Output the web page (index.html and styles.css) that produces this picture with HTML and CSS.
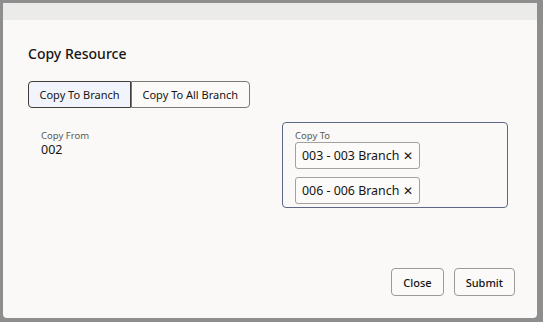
FILE: index.html
```html
<!DOCTYPE html>
<html lang="en">
<head>
  <meta charset="UTF-8" />
  <meta name="viewport" content="width=device-width, initial-scale=1.0" />
  <title>Copy Resource</title>
  <link rel="stylesheet" href="styles.css">
</head>
<body>
  <div class="dialog">
    <div class="strip"></div>
    <div class="content">
      <h1 class="title">Copy Resource</h1>

      <div class="segments">
        <button class="seg selected">Copy To Branch</button>
        <button class="seg">Copy To All Branch</button>
      </div>

      <div class="fields">
        <div class="from">
          <div class="label">Copy From</div>
          <div class="value">002</div>
        </div>
        <div class="to">
          <div class="label">Copy To</div>
          <div class="chips">
            <span class="chip">003 - 003 Branch <span class="x">&#x2715;</span></span>
            <span class="chip">006 - 006 Branch <span class="x">&#x2715;</span></span>
          </div>
        </div>
      </div>

      <div class="footer">
        <button class="btn">Close</button>
        <button class="btn">Submit</button>
      </div>
    </div>
  </div>
</body>
</html>
```

FILE: styles.css
```css
* { box-sizing: border-box; }
body {
  margin: 0;
  background: #8e8e8e;
  font-family: "Noto Sans", "Open Sans", sans-serif;
  color: #161513;
  height: 322px;
  padding: 3px 6px 4px 3px;
}
.dialog {
  height: 100%;
  background: #faf9f8;
  border-radius: 0 0 4px 4px;
  display: flex;
  flex-direction: column;
}
.strip {
  height: 17px;
  background: #ebebea;
}
.content {
  flex: 1;
  padding: 24px 22px 22px 25px;
  display: flex;
  flex-direction: column;
}
.title {
  margin: 0;
  font-size: 14px;
  font-weight: 500;
  line-height: 20px;
}
.segments {
  display: flex;
  margin-top: 17px;
}
.seg {
  font-family: inherit;
  font-size: 11px;
  color: #161513;
  height: 27px;
  padding: 0 10.5px;
  background: #fbfaf9;
  border: 1px solid #7a7875;
  cursor: pointer;
}
.seg:first-child {
  border-radius: 4px 0 0 4px;
  border-right: none;
}
.seg:last-child {
  border-radius: 0 4px 4px 0;
}
.seg.selected {
  background: #f1f4fb;
  border-color: #3f3d3a;
  border-right: 1px solid #3f3d3a;
}
.fields {
  display: flex;
  margin-top: 14px;
}
.from {
  width: 254px;
  padding: 8px 0 0 13px;
}
.label {
  font-size: 9.5px;
  color: #5b5954;
  line-height: 12px;
}
.value {
  font-size: 12.5px;
  line-height: 15px;
}
.to {
  width: 226px;
  height: 86px;
  border: 1px solid #5d6886;
  border-radius: 4px;
  padding: 7px 12px 0 12px;
}
.chips {
  display: flex;
  flex-direction: column;
  align-items: flex-start;
  gap: 8px;
}
.chip {
  font-size: 12.4px;
  height: 27px;
  line-height: 25px;
  padding: 0 6px;
  border: 1px solid #a3a19e;
  border-radius: 3px;
  background: #fcfbfa;
}
.x {
  font-size: 12px;
  font-weight: 300;
}
.footer {
  margin-top: auto;
  display: flex;
  justify-content: flex-end;
  gap: 10px;
}
.btn {
  font-family: inherit;
  font-size: 11px;
  font-weight: 500;
  color: #161513;
  height: 28px;
  padding: 0 11px;
  background: #fbfaf9;
  border: 1px solid #9d9b98;
  border-radius: 4px;
  cursor: pointer;
}
```
